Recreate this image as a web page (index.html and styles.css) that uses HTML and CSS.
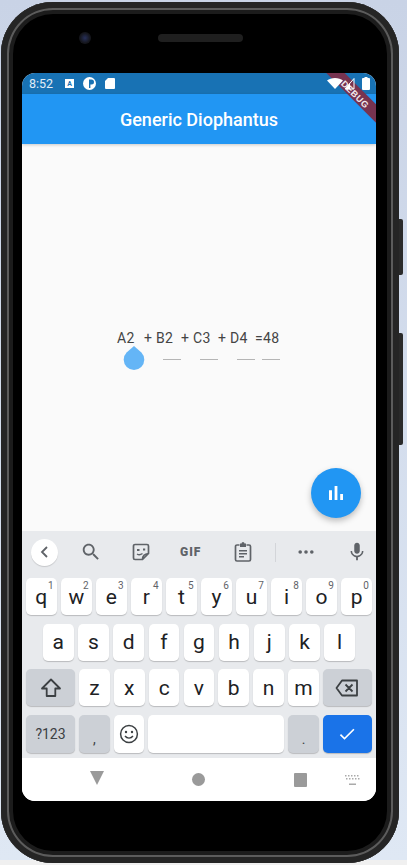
FILE: index.html
```html
<!DOCTYPE html>
<html>
<head>
    <title>Generic Diophantus</title>
    <link rel="stylesheet" href="styles.css">
</head>
<body>
    <div class="phone">
        <div class="side-button volume"></div>
        <div class="side-button power"></div>
        <div class="bezel-top">
            <div class="camera"></div>
            <div class="speaker"></div>
        </div>
        <div class="screen">
            <div class="status-bar">
                <span class="time">8:52</span>
                <svg class="status-a" width="9" height="9" viewBox="0 0 9 9"><path fill="#fff" d="M0 0h9v9H0z"/><text x="4.500" y="7" text-anchor="middle" class="status-a-text">A</text></svg>
                <svg class="status-p" width="13" height="13" viewBox="0 0 13 13"><circle cx="6.500" cy="6.500" r="6.500" fill="#fff"/><path fill="#1872b4" d="M6 2.500h2.500a2.500 2.500 0 0 1 0 5H7.400v3.500H6z"/></svg>
                <svg class="status-sd" width="10" height="11" viewBox="0 0 10 11"><path fill="#fff" d="M3 0h6a1 1 0 0 1 1 1v9a1 1 0 0 1-1 1H1a1 1 0 0 1-1-1V3z"/></svg>
                <span class="status-spacer"></span>
                <svg class="status-wifi" width="16" height="11" viewBox="0 0 16 11"><path fill="#fff" d="M8 11L0 2.500C2 .9 4.800 0 8 0s6 .9 8 2.500z"/></svg>
                <svg class="status-signal" width="11" height="13" viewBox="0 0 11 13"><path fill="none" stroke="#fff" d="M10 1.500V12H1z"/><path fill="#fff" d="M6 6v6H1z"/></svg>
                <svg class="status-battery" width="8" height="13" viewBox="0 0 8 13"><path fill="#fff" d="M2.500 0h3v1H7a1 1 0 0 1 1 1v10a1 1 0 0 1-1 1H1a1 1 0 0 1-1-1V2a1 1 0 0 1 1-1h1.500z"/></svg>
            </div>
            <div class="app-bar">Generic Diophantus</div>
            <div class="debug-banner">DEBUG</div>

            <div class="content">
                <div class="equation">
                    <div class="terms">
                        <span class="term first">A2</span>
                        <span class="term">+ B2</span>
                        <span class="term">+ C3</span>
                        <span class="term">+ D4</span>
                        <span class="term">=48</span>
                    </div>
                    <div class="answers">
                        <svg class="handle" width="22" height="24" viewBox="0 0 22 24"><path fill="#64b5f6" d="M11 0l7.400 6.500A10.300 10.300 0 1 1 3.600 6.500z"/></svg>
                        <span class="blank first-blank"></span>
                        <span class="blank"></span>
                        <span class="blank"></span>
                        <span class="blank last-blank"></span>
                    </div>
                </div>
                <div class="fab">
                    <svg width="24" height="24" viewBox="0 0 24 24"><path fill="#fff" d="M5 9.200h3V19H5zM10.600 5h2.800v14h-2.800zm5.600 8H19v6h-2.800z"/></svg>
                </div>
            </div>

            <div class="keyboard">
                <div class="toolbar">
                    <div class="back-button">
                        <svg width="16" height="16" viewBox="0 0 16 16"><path fill="none" stroke="#5f6368" stroke-width="1.800" d="M10 3L5 8l5 5"/></svg>
                    </div>
                    <svg class="tool tool-search" width="22" height="22" viewBox="0 0 24 24"><path fill="#5f6368" d="M15.500 14h-.79l-.28-.27C15.410 12.590 16 11.110 16 9.500 16 5.910 13.090 3 9.500 3S3 5.910 3 9.500 5.910 16 9.500 16c1.610 0 3.090-.59 4.230-1.570l.27.28v.79l5 4.990L20.490 19l-4.990-5zm-6 0C7.010 14 5 11.990 5 9.500S7.010 5 9.500 5 14 7.010 14 9.500 11.990 14 9.500 14z"/></svg>
                    <svg class="tool tool-sticker" width="18" height="18" viewBox="0 0 18 18"><path fill="none" stroke="#5f6368" stroke-width="1.700" d="M3 1.500h12A1.500 1.500 0 0 1 16.500 3v7.500l-6 6H3A1.500 1.500 0 0 1 1.500 15V3A1.500 1.500 0 0 1 3 1.500zM10.500 16.500c0-3 1.500-5.500 6-6"/><path fill="#5f6368" d="M5 6h2.500v2H5zM11 5.500h2.200v2H11z"/><path fill="none" stroke="#5f6368" stroke-width="1.400" d="M5 11c1.500 1 3.500 1 5.500-.5"/></svg>
                    <span class="tool tool-gif">GIF</span>
                    <svg class="tool tool-clip" width="18" height="20" viewBox="0 0 18 20"><path fill="none" stroke="#5f6368" stroke-width="1.700" d="M5.500 3H3a1.500 1.500 0 0 0-1.500 1.500v13A1.500 1.500 0 0 0 3 19h12a1.500 1.500 0 0 0 1.500-1.500v-13A1.500 1.500 0 0 0 15 3h-2.500"/><path fill="#5f6368" d="M6 1.500h1.500a1.500 1.500 0 0 1 3 0H12v3.500H6zM5 8h8v1.500H5zM5 11h8v1.500H5zM5 14h5v1.500H5z"/></svg>
                    <span class="tool-divider"></span>
                    <svg class="tool tool-dots" width="16" height="4" viewBox="0 0 16 4"><circle cx="2.200" cy="2" r="1.800" fill="#5f6368"/><circle cx="8" cy="2" r="1.800" fill="#5f6368"/><circle cx="13.800" cy="2" r="1.800" fill="#5f6368"/></svg>
                    <svg class="tool tool-mic" width="22" height="22" viewBox="0 0 24 24"><path fill="#5f6368" d="M12 14c1.660 0 3-1.340 3-3V5c0-1.660-1.340-3-3-3S9 3.340 9 5v6c0 1.660 1.340 3 3 3zm5.300-3c0 3-2.540 5.100-5.300 5.100S6.700 14 6.700 11H5c0 3.410 2.720 6.230 6 6.720V21h2v-3.280c3.280-.48 6-3.300 6-6.720h-1.700z"/></svg>
                </div>

                <div class="key-row">
                    <div class="key">q<sup>1</sup></div>
                    <div class="key">w<sup>2</sup></div>
                    <div class="key">e<sup>3</sup></div>
                    <div class="key">r<sup>4</sup></div>
                    <div class="key">t<sup>5</sup></div>
                    <div class="key">y<sup>6</sup></div>
                    <div class="key">u<sup>7</sup></div>
                    <div class="key">i<sup>8</sup></div>
                    <div class="key">o<sup>9</sup></div>
                    <div class="key">p<sup>0</sup></div>
                </div>
                <div class="key-row row-middle">
                    <div class="key">a</div>
                    <div class="key">s</div>
                    <div class="key">d</div>
                    <div class="key">f</div>
                    <div class="key">g</div>
                    <div class="key">h</div>
                    <div class="key">j</div>
                    <div class="key">k</div>
                    <div class="key">l</div>
                </div>
                <div class="key-row">
                    <div class="key wide grey">
                        <svg width="22" height="22" viewBox="0 0 22 22"><path fill="none" stroke="#3c4043" stroke-width="1.800" stroke-linejoin="round" d="M11 2.500L2 11.500h4.700V19h8.600v-7.500H20z"/></svg>
                    </div>
                    <div class="key">z</div>
                    <div class="key">x</div>
                    <div class="key">c</div>
                    <div class="key">v</div>
                    <div class="key">b</div>
                    <div class="key">n</div>
                    <div class="key">m</div>
                    <div class="key wide grey">
                        <svg width="24" height="20" viewBox="0 0 24 20"><path fill="none" stroke="#3c4043" stroke-width="1.800" stroke-linejoin="round" d="M7 2.500h15v15H7L1.500 10zM10.500 6.500l7 7M17.500 6.500l-7 7"/></svg>
                    </div>
                </div>
                <div class="key-row row-bottom">
                    <div class="key wide grey symbols">?123</div>
                    <div class="key grey punct">,</div>
                    <div class="key">
                        <svg width="20" height="20" viewBox="0 0 20 20"><circle cx="10" cy="10" r="8.400" fill="none" stroke="#3c4043" stroke-width="1.500"/><circle cx="7" cy="8" r="1.200" fill="#3c4043"/><circle cx="13" cy="8" r="1.200" fill="#3c4043"/><path fill="none" stroke="#3c4043" stroke-width="1.400" d="M6 12c2 2.800 6 2.800 8 0"/></svg>
                    </div>
                    <div class="key space"></div>
                    <div class="key grey punct">.</div>
                    <div class="key wide blue">
                        <svg width="20" height="20" viewBox="0 0 24 24"><path fill="#fff" d="M9 16.170L4.830 12l-1.420 1.410L9 19 21 7l-1.410-1.410z"/></svg>
                    </div>
                </div>
            </div>

            <div class="nav-bar">
                <span class="nav-back"></span>
                <span class="nav-home"></span>
                <span class="nav-recent"></span>
                <svg class="nav-keyboard" width="15" height="10" viewBox="0 0 15 10"><path fill="#aaa" d="M0 0h1.500v1.500H0zM3 0h1.500v1.500H3zM6 0h1.500v1.500H6zM9 0h1.500v1.500H9zM12 0h1.500v1.500H12zM1 3h1.500v1.500H1zM4 3h1.500v1.500H4zM7 3h1.500v1.500H7zM10 3h1.500v1.500H10zM13 3h1.500v1.500H13zM4 8.500h7V10H4z"/></svg>
            </div>
        </div>
    </div>
</body>
</html>
```

FILE: styles.css
```css
html, body {
    height: 100%;
}

body {
    margin: 0;
    overflow: hidden;
    font-family: Roboto, "Liberation Sans", sans-serif;
    background: linear-gradient(180deg, #c9d3e6 0, #dfe8f4 860px, #f0f0f0 860px);
}

.phone {
    position: relative;
    box-sizing: border-box;
    width: 398px;
    height: 861px;
    margin: 2px 0 0 1px;
    padding: 0 23px 62px 21px;
    background-color: #000;
    border-radius: 52px;
    box-shadow: inset 0 0 0 6px #252525, inset 0 0 0 8px #5c5c5c, inset 0 0 0 12px #1c1c1c;
}

.side-button {
    position: absolute;
    left: 398px;
    width: 4px;
    background-color: #2a2a2a;
    border-radius: 0 2px 2px 0;
}

.side-button.volume {
    top: 217px;
    height: 56px;
}

.side-button.power {
    top: 331px;
    height: 112px;
}

.bezel-top {
    display: flex;
    align-items: center;
    height: 71px;
}

.camera {
    width: 12px;
    height: 12px;
    margin-left: 57px;
    background: radial-gradient(circle, #27305a 0%, #15161c 60%);
    border-radius: 50%;
}

.speaker {
    width: 85px;
    height: 8px;
    margin-left: 67px;
    background-color: #1f1f1f;
    border-radius: 4px;
}

.screen {
    position: relative;
    display: flex;
    flex-direction: column;
    height: 728px;
    overflow: hidden;
    border-radius: 13px;
    background-color: #fff;
}

.status-bar {
    display: flex;
    align-items: center;
    height: 21px;
    flex-shrink: 0;
    padding: 0 6px 0 7px;
    background-color: #1872b4;
}

.time {
    width: 36px;
    color: #e3edf6;
    font-size: 12.500px;
}

.status-a-text {
    fill: #1872b4;
    font-size: 7px;
    font-weight: 700;
    font-family: Roboto, sans-serif;
}

.status-p {
    margin-left: 9px;
}

.status-sd {
    margin-left: 9px;
}

.status-spacer {
    flex: 1;
}

.status-wifi,
.status-signal,
.status-battery {
    position: relative;
    z-index: 3;
}

.status-signal {
    margin-left: 1px;
}

.status-battery {
    margin-left: 7px;
}

.app-bar {
    height: 50px;
    flex-shrink: 0;
    line-height: 52px;
    text-align: center;
    color: #fff;
    font-size: 18px;
    font-weight: 500;
    background-color: #2196f3;
    box-shadow: 0 1px 3px rgba(0, 0, 0, 0.2);
    z-index: 1;
}

.debug-banner {
    position: absolute;
    top: 14px;
    left: 274px;
    z-index: 2;
    width: 120px;
    height: 13px;
    line-height: 16px;
    text-align: center;
    color: #f3e9ec;
    font-family: "Liberation Sans", sans-serif;
    font-size: 9px;
    font-weight: 700;
    letter-spacing: 0.5px;
    background-color: #773350;
    transform: rotate(45deg);
}

.content {
    position: relative;
    display: flex;
    flex: 1;
    justify-content: center;
    padding-top: 186px;
    background-color: #fafafa;
}

.equation {
    width: 164px;
}

.terms {
    display: flex;
    height: 16px;
    color: #444;
    font-size: 14px;
    line-height: 16px;
    letter-spacing: 0.3px;
}

.term {
    flex-shrink: 0;
    width: 37px;
    white-space: nowrap;
}

.term.first {
    width: 27px;
}

.answers {
    display: flex;
    align-items: flex-start;
    height: 24px;
}

.handle {
    margin-left: 6px;
}

.blank {
    width: 18px;
    margin: 13px 0 0 19px;
    border-bottom: 1px solid #b5b5b5;
}

.blank.first-blank {
    margin-left: 18px;
}

.blank.last-blank {
    margin-left: 7px;
}

.fab {
    position: absolute;
    right: 15px;
    bottom: 13px;
    display: flex;
    align-items: center;
    justify-content: center;
    width: 50px;
    height: 50px;
    background-color: #2196f3;
    border-radius: 50%;
    box-shadow: 0 3px 6px rgba(0, 0, 0, 0.25);
}

.keyboard {
    flex-shrink: 0;
    height: 227px;
    box-sizing: border-box;
    padding: 0 4px;
    background-color: #e8eaed;
}

.toolbar {
    display: flex;
    align-items: center;
    height: 47px;
    margin-bottom: 0;
    padding-bottom: 5px;
    box-sizing: border-box;
}

.back-button {
    display: flex;
    align-items: center;
    justify-content: center;
    width: 27px;
    height: 27px;
    margin-left: 5px;
    background-color: #fff;
    border-radius: 50%;
    box-shadow: 0 1px 1px rgba(0, 0, 0, 0.15);
}

.tool {
    flex-shrink: 0;
}

.tool-search {
    margin-left: 22px;
}

.tool-sticker {
    margin-left: 30px;
}

.tool-gif {
    margin-left: 30px;
    color: #5f6368;
    font-size: 12px;
    font-weight: 900;
    letter-spacing: 1px;
}

.tool-clip {
    margin-left: 33px;
}

.tool-divider {
    width: 1px;
    height: 19px;
    margin-left: 23px;
    background-color: #d3d5d9;
}

.tool-dots {
    margin-left: 22px;
}

.tool-mic {
    margin-left: 32px;
}

.key-row {
    display: flex;
    justify-content: space-between;
    height: 37px;
    margin-bottom: 8.500px;
}

.key-row.row-middle {
    padding: 0 17px;
}

.key-row.row-bottom {
    height: 38px;
    margin-bottom: 0;
}

.key {
    position: relative;
    display: flex;
    align-items: center;
    justify-content: center;
    width: 30.600px;
    color: #202124;
    font-size: 21px;
    background-color: #fff;
    border-radius: 5px;
    box-shadow: 0 1px 1px rgba(0, 0, 0, 0.2);
}

.key sup {
    position: absolute;
    top: 2px;
    right: 3px;
    color: #5f6368;
    font-size: 10px;
    line-height: 12px;
}

.key.wide {
    width: 49px;
}

.key.grey {
    background-color: #ccd0d6;
}

.key.blue {
    background-color: #1a73e8;
}

.key.space {
    width: 136px;
}

.key.symbols {
    color: #3c4043;
    font-size: 14px;
}

.key.punct {
    align-items: flex-end;
    padding-bottom: 6px;
    box-sizing: border-box;
    color: #3c4043;
    font-size: 14px;
}

.nav-bar {
    display: flex;
    height: 43px;
    flex-shrink: 0;
    align-items: center;
    background-color: #fff;
}

.nav-back {
    width: 0;
    height: 0;
    margin: 0 0 3px 68px;
    border-top: 14px solid #9a9a9a;
    border-left: 7.500px solid transparent;
    border-right: 7.500px solid transparent;
}

.nav-home {
    width: 13px;
    height: 13px;
    margin-left: 88px;
    background-color: #9a9a9a;
    border-radius: 50%;
}

.nav-recent {
    width: 13px;
    height: 14px;
    margin-left: 89px;
    background-color: #9a9a9a;
    border-radius: 1px;
}

.nav-keyboard {
    margin-left: 38px;
}
```
